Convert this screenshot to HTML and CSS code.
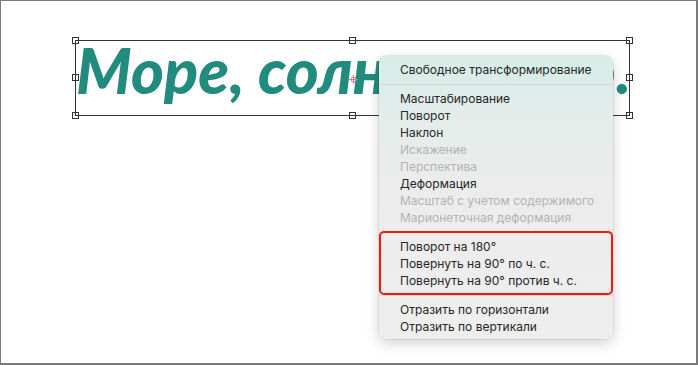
FILE: index.html
```html
<!DOCTYPE html>
<html>
<head>
<meta charset="utf-8">
<link rel="stylesheet" href="styles.css">
</head>
<body>
<div class="frame">
  <div class="object">
    <div class="caption">Море, солн<span class="squeeze">це, лет</span>о.</div>
    <span class="handle h-tl"></span>
    <span class="handle h-tc"></span>
    <span class="handle h-tr"></span>
    <span class="handle h-ml"></span>
    <span class="handle h-mr"></span>
    <span class="handle h-bl"></span>
    <span class="handle h-bc"></span>
    <span class="handle h-br"></span>
    <svg class="pivot" width="9" height="9" viewBox="0 0 9 9"><circle cx="4.5" cy="4.5" r="2.5" fill="none" stroke="#d9788a" stroke-width="1"/><path d="M4.5 0V9M0 4.5H9" stroke="#d9788a" stroke-width="1"/></svg>
  </div>
  <div class="menu">
    <div class="group">
      <div class="item">Свободное трансформирование</div>
    </div>
    <div class="sep"></div>
    <div class="group">
      <div class="item">Масштабирование</div>
      <div class="item">Поворот</div>
      <div class="item">Наклон</div>
      <div class="item off">Искажение</div>
      <div class="item off">Перспектива</div>
      <div class="item">Деформация</div>
      <div class="item off">Масштаб с учетом содержимого</div>
      <div class="item off">Марионеточная деформация</div>
    </div>
    <div class="sep"></div>
    <div class="group">
      <div class="item">Поворот на 180°</div>
      <div class="item">Повернуть на 90° по ч. с.</div>
      <div class="item">Повернуть на 90° против ч. с.</div>
    </div>
    <div class="sep"></div>
    <div class="group">
      <div class="item">Отразить по горизонтали</div>
      <div class="item">Отразить по вертикали</div>
    </div>
    <div class="highlight"></div>
  </div>
</div>
</body>
</html>
```
FILE: styles.css
```css
html, body {
  margin: 0;
  padding: 0;
  background: #ffffff;
}
.frame {
  position: relative;
  width: 698px;
  height: 365px;
  box-sizing: border-box;
  border: 1px solid #7b7b7b;
  border-right-width: 2px;
  border-bottom-width: 2px;
  background: #ffffff;
  overflow: hidden;
}
.object {
  position: absolute;
  left: 74px;
  top: 39px;
  width: 553px;
  height: 74px;
  border: 1px solid #333333;
}
.caption {
  position: absolute;
  left: 0px;
  top: -9px;
  font-family: "Lato", sans-serif;
  font-weight: 900;
  font-style: italic;
  font-size: 63px;
  color: #218c7e;
  white-space: nowrap;
  letter-spacing: 0px;
}
.squeeze {
  letter-spacing: -2.4px;
}
.handle {
  position: absolute;
  width: 7px;
  height: 7px;
  box-sizing: border-box;
  border: 1px solid #333333;
  background: transparent;
}
.h-tl { left: -4px; top: -4px; }
.h-tc { left: 273px; top: -4px; }
.h-tr { right: -4px; top: -4px; }
.h-ml { left: -4px; top: 33px; }
.h-mr { right: -4px; top: 33px; }
.h-bl { left: -4px; bottom: -4px; }
.h-bc { left: 273px; bottom: -4px; }
.h-br { right: -4px; bottom: -4px; }
.pivot {
  position: absolute;
  left: 273px;
  top: 34px;
}
.menu {
  position: absolute;
  left: 378px;
  top: 55px;
  width: 234px;
  padding: 5px 0 4px;
  border-radius: 7px;
  background: linear-gradient(to bottom, #d6ede8 0px, #e4ecea 60px, #ececec 130px, #eeeeee 284px);
  box-shadow: 0 0 0 0.5px rgba(0,0,0,0.14), 0 4px 14px rgba(0,0,0,0.18);
  font-family: "Inter", "Liberation Sans", sans-serif;
  font-size: 12px;
  color: #262626;
}
.item {
  height: 17px;
  line-height: 17px;
  padding-left: 21px;
  white-space: nowrap;
}
.item.off {
  color: #b3b3b3;
}
.sep {
  height: 1px;
  background: #d2d6d5;
  margin: 6px 0 5px;
}
.highlight {
  position: absolute;
  left: 0px;
  top: 175px;
  width: 234px;
  height: 64px;
  box-sizing: border-box;
  border: 2.5px solid #f01a0c;
  border-radius: 5px;
}
```
